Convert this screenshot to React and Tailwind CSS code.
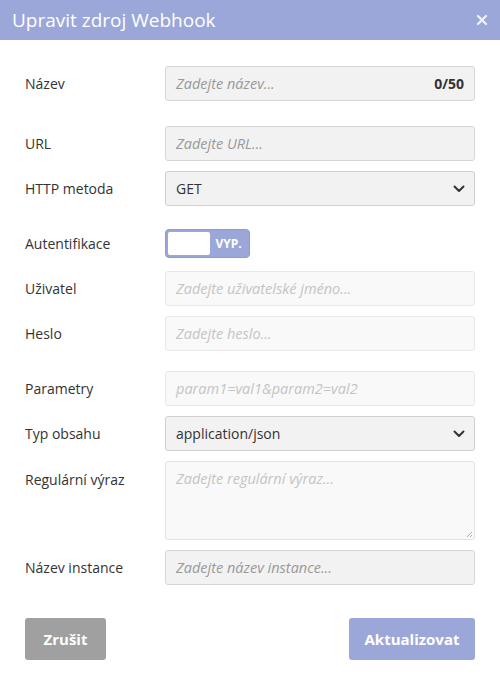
import React from "react";

const font = { fontFamily: '"Open Sans", "Liberation Sans", sans-serif' };

function Row({ label, children, className = "", labelTop = false }) {
  return (
    <div className={`flex ${labelTop ? "items-start" : "items-center"} ${className}`}>
      <div className={`w-[140px] shrink-0 text-[14px] text-[#333] ${labelTop ? "pt-[8px]" : ""}`}>{label}</div>
      <div className="flex-1">{children}</div>
    </div>
  );
}

function Input({ placeholder, disabled = false, right }) {
  return (
    <div
      className={`h-[35px] w-full rounded-[3px] border flex items-center px-[10px] text-[14.5px] italic ${
        disabled
          ? "bg-[#f9f9f9] border-[#e8e8e8] text-[#c4c4c4]"
          : "bg-[#f2f2f2] border-[#d6d6d6] text-[#999]"
      }`}
    >
      <span className="flex-1">{placeholder}</span>
      {right}
    </div>
  );
}

function Select({ value }) {
  return (
    <div className="h-[35px] w-full rounded-[3px] border border-[#d0d0d0] bg-[#f2f2f2] flex items-center pl-[10px] pr-[8px] text-[14px] text-[#333]">
      <span className="flex-1">{value}</span>
      <svg width="14" height="14" viewBox="0 0 14 14" fill="none">
        <path d="M2.5 4.5 L7 9 L11.5 4.5" stroke="#333" strokeWidth="2" strokeLinecap="round" strokeLinejoin="round" />
      </svg>
    </div>
  );
}

export default function App() {
  return (
    <div className="w-[500px] h-[685px] bg-white flex flex-col" style={font}>
      <div className="h-[40px] bg-[#9ba7d9] flex items-center justify-between pl-[12px] pr-[12px] shrink-0">
        <div className="text-white text-[19px]">Upravit zdroj Webhook</div>
        <svg width="12" height="12" viewBox="0 0 12 12">
          <path d="M2 2 L10 10 M10 2 L2 10" stroke="#eef0fa" strokeWidth="2.4" strokeLinecap="round" />
        </svg>
      </div>
      <div className="px-[25px] flex flex-col">
        <Row label="Název" className="mt-[26px]">
          <Input
            placeholder="Zadejte název..."
            right={<span className="not-italic font-bold text-[#333] text-[14px]">0/50</span>}
          />
        </Row>
        <Row label="URL" className="mt-[25px]">
          <Input placeholder="Zadejte URL..." />
        </Row>
        <Row label="HTTP metoda" className="mt-[10px]">
          <Select value="GET" />
        </Row>
        <Row label="Autentifikace" className="mt-[23px]">
          <div className="w-[85px] h-[29px] rounded-[4px] bg-[#9ba7d9] border border-[#8f9bd0] flex items-center px-[2px]">
            <div className="w-[42px] h-[23px] bg-white rounded-[2px]" />
            <div className="flex-1 text-center text-white text-[12px] font-bold">VYP.</div>
          </div>
        </Row>
        <Row label="Uživatel" className="mt-[13px]">
          <Input placeholder="Zadejte uživatelské jméno..." disabled />
        </Row>
        <Row label="Heslo" className="mt-[10px]">
          <Input placeholder="Zadejte heslo..." disabled />
        </Row>
        <Row label="Parametry" className="mt-[20px]">
          <Input placeholder="param1=val1&param2=val2" disabled />
        </Row>
        <Row label="Typ obsahu" className="mt-[10px]">
          <Select value="application/json" />
        </Row>
        <Row label="Regulární výraz" className="mt-[10px]" labelTop>
          <div className="relative h-[79px] w-full rounded-[3px] border border-[#e3e3e3] bg-[#f9f9f9] px-[10px] pt-[6px] text-[14.5px] italic text-[#c4c4c4]">
            Zadejte regulární výraz...
            <svg className="absolute right-[1px] bottom-[1px]" width="8" height="8" viewBox="0 0 8 8">
              <path d="M7 2 L2 7 M7 5 L5 7" stroke="#999" strokeWidth="0.8" />
            </svg>
          </div>
        </Row>
        <Row label="Název instance" className="mt-[10px]">
          <Input placeholder="Zadejte název instance..." />
        </Row>
        <div className="flex justify-between mt-[33px]">
          <button className="h-[42px] w-[81px] rounded-[3px] bg-[#a0a0a0] text-white font-bold text-[15px]">Zrušit</button>
          <button className="h-[42px] w-[126px] rounded-[3px] bg-[#9ba7d9] text-white font-bold text-[15px]">Aktualizovat</button>
        </div>
      </div>
    </div>
  );
}
